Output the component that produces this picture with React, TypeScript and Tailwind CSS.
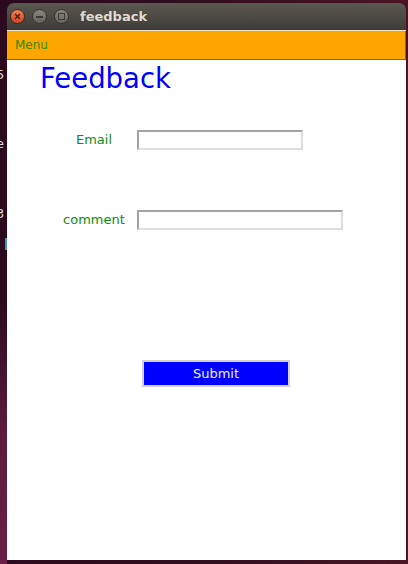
import React from "react";

const font = { fontFamily: '"DejaVu Sans", "Liberation Sans", sans-serif' };

function WinButton({ kind }: { kind: "close" | "min" | "max" }) {
  if (kind === "close") {
    return (
      <div className="w-[15px] h-[15px] rounded-full bg-gradient-to-b from-[#f37b52] to-[#d9451c] border border-[#3a2a22] flex items-center justify-center">
        <svg width="7" height="7" viewBox="0 0 7 7">
          <path d="M1 1 L6 6 M6 1 L1 6" stroke="#3b2118" strokeWidth="1.3" />
        </svg>
      </div>
    );
  }
  return (
    <div className="w-[15px] h-[15px] rounded-full bg-gradient-to-b from-[#8a8780] to-[#66635d] border border-[#34322e] flex items-center justify-center">
      {kind === "min" ? (
        <div className="w-[7px] h-[2px] bg-[#3a3934]" />
      ) : (
        <div className="w-[7px] h-[7px] border-[1.5px] border-[#3a3934]" />
      )}
    </div>
  );
}

export default function App() {
  return (
    <div
      className="relative w-[408px] h-[564px] overflow-hidden bg-gradient-to-r from-[#2a0a1c] via-[#300f1f] to-[#4a1424] pt-[3px] pl-[7px] pr-[2px] pb-[4px] flex flex-col"
      style={font}
    >
      {/* desktop fragments at left edge */}
      <div className="absolute left-[-4px] top-[68px] text-[13px] text-[#d8d8d8] leading-none">5</div>
      <div className="absolute left-[-4px] top-[137px] text-[13px] text-[#d8d8d8] leading-none">e</div>
      <div className="absolute left-[-4px] top-[207px] text-[13px] text-[#d8d8d8] leading-none">3</div>
      <div className="absolute left-[5px] top-[238px] w-[2px] h-[12px] bg-[#4a90c8]" />
      <div className="absolute left-0 top-[290px] w-[7px] h-[274px] bg-gradient-to-b from-[#2a0a1c] via-[#5a1a3c] to-[#6a1f45]" />

      <div className="relative flex-1 flex flex-col">
        {/* title bar */}
        <div className="h-[27px] rounded-t-[7px] bg-gradient-to-b from-[#5b5851] to-[#3d3c37] flex items-center pl-[3px]">
          <div className="flex items-center gap-[7px]">
            <WinButton kind="close" />
            <WinButton kind="min" />
            <WinButton kind="max" />
          </div>
          <span className="ml-[11px] text-[13px] font-bold text-[#dfdbd2] leading-none">feedback</span>
        </div>
        <div className="h-[1px] bg-[#e8e2c8]" />
        {/* menu bar */}
        <div className="h-[29px] bg-[#ffa500] border-b border-r border-[#9a6400] flex items-center pl-[8px]">
          <span className="text-[12px] text-[#2f8a00] leading-none">Menu</span>
        </div>
        {/* content */}
        <div className="flex-1 bg-white flex flex-col">
          <div className="ml-[33px] mt-[3px] text-[27.5px] leading-[30px] text-[#0000ff]">Feedback</div>
          <div className="flex items-center mt-[37px] ml-[44px]">
            <div className="w-[86px] text-center text-[13px] text-[#138a0c]">Email</div>
            <div className="w-[166px] h-[20px] border-2 border-t-[#a3a3a3] border-l-[#a3a3a3] border-b-[#dddddd] border-r-[#dddddd] bg-white" />
          </div>
          <div className="flex items-center mt-[60px] ml-[44px]">
            <div className="w-[86px] text-center text-[13px] text-[#138a0c]">comment</div>
            <div className="w-[206px] h-[20px] border-2 border-t-[#a3a3a3] border-l-[#a3a3a3] border-b-[#dddddd] border-r-[#dddddd] bg-white" />
          </div>
          <div className="mt-[130px] ml-[135px] w-[148px] h-[27px] bg-[#0000ff] border-2 border-[#d0d0d0] flex items-center justify-center text-[13px] text-[#eeeeff]">
            Submit
          </div>
        </div>
      </div>
    </div>
  );
}
